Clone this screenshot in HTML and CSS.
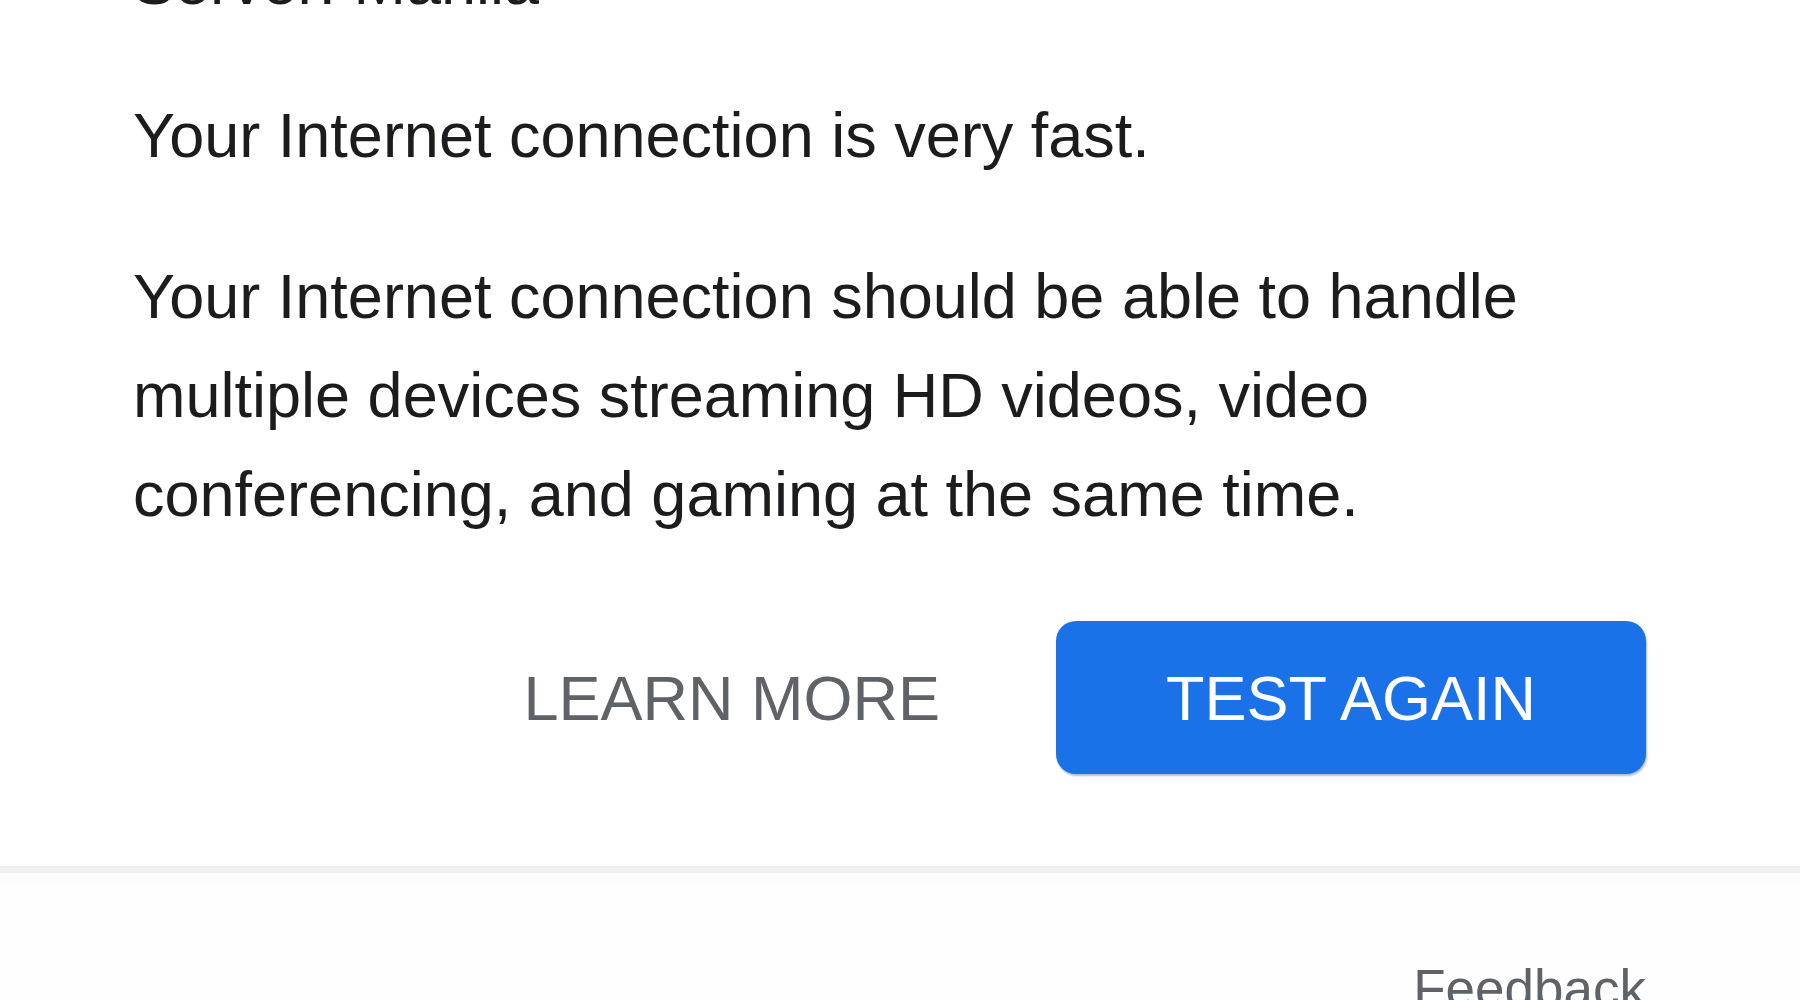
FILE: index.html
```html
<!DOCTYPE html>
<html lang="en">
<head>
<meta charset="utf-8">
<title>Speed test result</title>
<link rel="stylesheet" href="styles.css">
</head>
<body>
<main class="result">
  <p class="server">Server: Manila</p>
  <p class="text">Your Internet connection is very fast.</p>
  <p class="text">Your Internet connection should be able to handle multiple devices streaming HD videos, video conferencing, and gaming at the same time.</p>
  <div class="actions">
    <button class="btn btn-text" type="button">LEARN MORE</button>
    <button class="btn btn-primary" type="button">TEST AGAIN</button>
  </div>
</main>
<footer class="footer">
  <a class="feedback" href="#">Feedback</a>
</footer>
</body>
</html>
```
FILE: styles.css
```css
html, body {
  margin: 0;
  padding: 0;
  background: #ffffff;
  overflow: hidden;
}

body {
  font-family: "Liberation Sans", Arial, Helvetica, sans-serif;
  color: #1c1c1e;
  width: 1800px;
  height: 1000px;
}

.result {
  padding: 0 154px 0 133px;
}

.server {
  margin: -67px 0 54px;
  font-size: 63px;
  line-height: 99px;
}

.text {
  margin: 0 0 62px;
  font-size: 63px;
  line-height: 99px;
  max-width: 1513px;
}

.text:last-of-type {
  margin-bottom: 0;
}

.actions {
  display: flex;
  justify-content: flex-end;
  align-items: center;
  margin-top: 77px;
}

.btn {
  font-family: "Liberation Sans", Arial, Helvetica, sans-serif;
  font-size: 63px;
  line-height: normal;
  height: 153px;
  border: none;
  border-radius: 20px;
  display: flex;
  align-items: center;
  justify-content: center;
  cursor: pointer;
  padding: 0;
}

.btn-text {
  background: transparent;
  color: #5f6368;
  margin-right: 116px;
}

.btn-primary {
  background: #1b72e8;
  color: #ffffff;
  width: 590px;
  box-shadow: 1px 2px 2px rgba(20, 60, 140, 0.35);
}

.footer {
  margin-top: 92px;
  border-top: 1px solid #ececec;
  background: linear-gradient(#f0f0f0 0, #f0f0f0 6px, #fbfbfb 6px, #fefefe 20px);
  padding: 91px 154px 0 0;
  display: flex;
  justify-content: flex-end;
}

.feedback {
  font-size: 53px;
  line-height: normal;
  color: #5f6368;
  text-decoration: none;
}
```
